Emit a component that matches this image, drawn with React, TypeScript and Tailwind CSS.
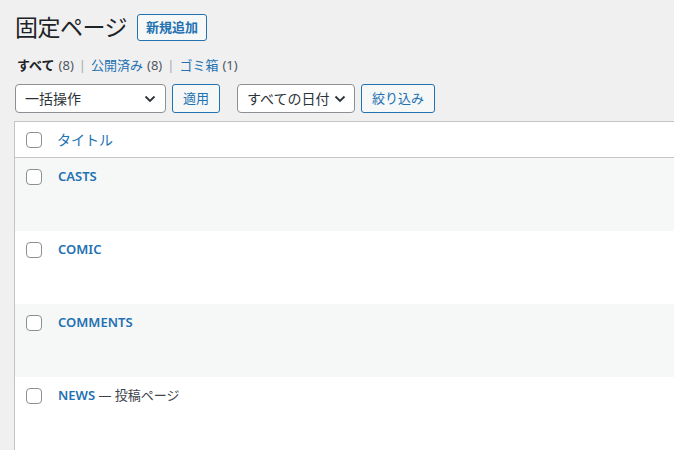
import React from "react";

const rows = [
  { title: "CASTS", note: "" },
  { title: "COMIC", note: "" },
  { title: "COMMENTS", note: "" },
  { title: "NEWS", note: " — 投稿ページ" },
];

function Checkbox() {
  return <span className="block w-4 h-4 shrink-0 rounded-[4px] border border-[#8c8f94] bg-white" />;
}

function Chevron() {
  return (
    <svg width="12" height="8" viewBox="0 0 12 8" className="shrink-0">
      <path d="M1.5 1.5 L6 6 L10.5 1.5" fill="none" stroke="#2c3338" strokeWidth="1.8" />
    </svg>
  );
}

export default function App() {
  return (
    <div
      className="w-[674px] h-[450px] overflow-hidden bg-[#f0f0f1] text-[#3c434a] text-[13px]"
      style={{ fontFamily: '"Noto Sans", "Noto Sans CJK JP", sans-serif' }}
    >
      {/* Heading */}
      <div className="flex items-center pt-[14px] pl-[15px] h-[41px]">
        <h1 className="text-[23px] leading-none text-[#1d2327] tracking-[-0.5px]">固定ページ</h1>
        <button className="ml-[10px] h-[27px] px-[8px] rounded-[3px] border border-[#2271b1] bg-[#f6f7f7] text-[#2271b1] font-bold text-[13px] leading-none">
          新規追加
        </button>
      </div>

      {/* Status links */}
      <div className="flex items-center pl-[17px] mt-[16px] h-[16px] text-[13px] leading-none">
        <span className="font-bold text-[#1d2327]">すべて</span>
        <span className="ml-[4px] text-[#50575e]">(8)</span>
        <span className="mx-[5px] text-[#a7aaad]">|</span>
        <span className="text-[#2271b1]">公開済み</span>
        <span className="ml-[4px] text-[#50575e]">(8)</span>
        <span className="mx-[5px] text-[#a7aaad]">|</span>
        <span className="text-[#2271b1]">ゴミ箱</span>
        <span className="ml-[4px] text-[#50575e]">(1)</span>
      </div>

      {/* Filters */}
      <div className="flex items-center pl-[15px] mt-[11px] h-[29px]">
        <div className="flex items-center justify-between w-[151px] h-[29px] pl-[9px] pr-[9px] bg-white border border-[#8c8f94] rounded-[4px] text-[14px] text-[#2c3338]">
          <span>一括操作</span>
          <Chevron />
        </div>
        <button className="ml-[6px] w-[48px] h-[29px] rounded-[3px] border border-[#2271b1] bg-[#f6f7f7] text-[#2271b1] text-[13px]">
          適用
        </button>
        <div className="ml-[17px] flex items-center justify-between w-[118px] h-[29px] pl-[9px] pr-[8px] bg-white border border-[#8c8f94] rounded-[4px] text-[14px] text-[#2c3338]">
          <span>すべての日付</span>
          <Chevron />
        </div>
        <button className="ml-[6px] w-[74px] h-[29px] rounded-[3px] border border-[#2271b1] bg-[#f6f7f7] text-[#2271b1] text-[13px]">
          絞り込み
        </button>
      </div>

      {/* Table */}
      <div className="ml-[14px] mt-[8px] w-[700px] border-l border-t border-[#c3c4c7] bg-white">
        <div className="flex items-start h-[36px] pt-[10px] pl-[11px] border-b border-[#c3c4c7]">
          <Checkbox />
          <span className="ml-[15px] -mt-[2px] text-[14px] leading-[20px] text-[#2271b1]">タイトル</span>
        </div>
        {rows.map((r, i) => (
          <div
            key={r.title}
            className={
              "flex items-start h-[73px] pt-[11px] pl-[11px] " + (i % 2 === 0 ? "bg-[#f6f7f7]" : "bg-white")
            }
          >
            <Checkbox />
            <span className="ml-[16px] -mt-[2px] text-[13px] leading-[18px]">
              <span className="font-semibold text-[#2271b1]">{r.title}</span>
              {r.note && <span className="text-[#3c434a]">{r.note}</span>}
            </span>
          </div>
        ))}
      </div>
    </div>
  );
}
